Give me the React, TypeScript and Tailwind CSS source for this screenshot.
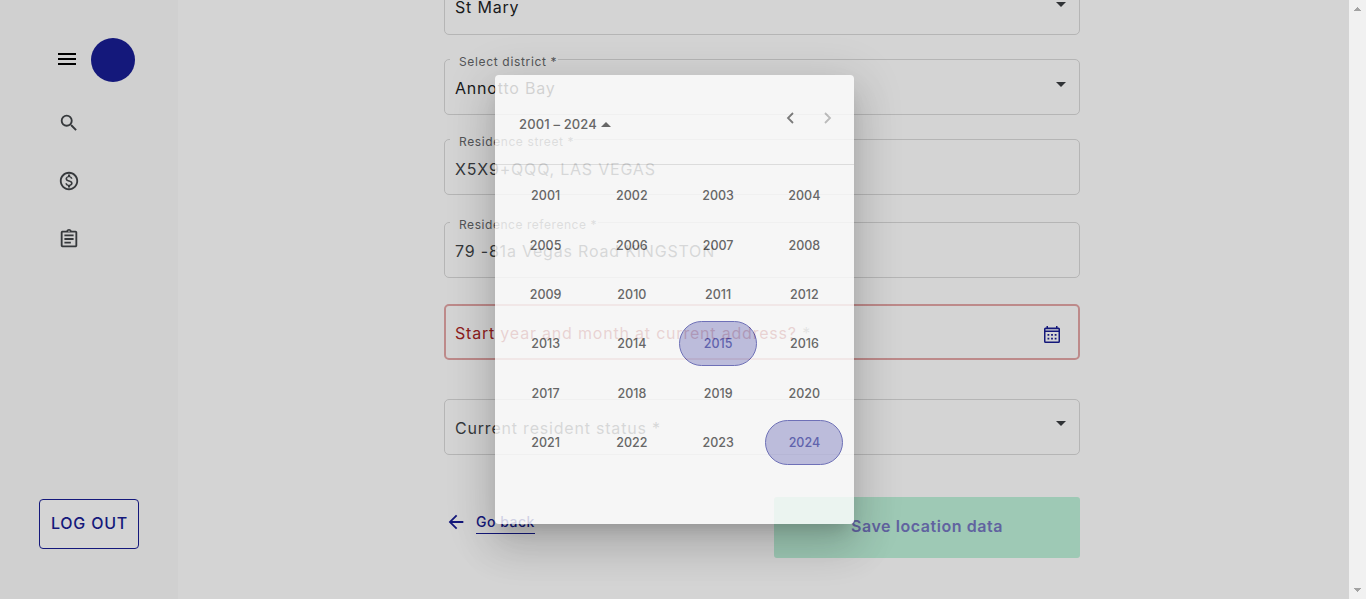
import type { ReactNode } from "react";
import { MdMenu, MdSearch, MdOutlineMonetizationOn, MdOutlineAssignment, MdArrowBack } from "react-icons/md";

const YEARS = Array.from({ length: 24 }, (_, i) => 2001 + i);

function Caret({ up = false }: { up?: boolean }) {
  return (
    <svg width="10" height="5" viewBox="0 0 10 5" fill="currentColor">
      {up ? <path d="M0 5 5 0l5 5z" /> : <path d="M0 0h10L5 5z" />}
    </svg>
  );
}

function Field({ label, children, select, className = "", textClass = "pt-[17px]", caretClass = "pt-[22px]" }: {
  label?: ReactNode;
  children: ReactNode;
  select?: boolean;
  className?: string;
  textClass?: string;
  caretClass?: string;
}) {
  return (
    <div className={`relative flex h-14 shrink-0 justify-between rounded-[5px] border border-[#b5b5b5] pl-[10px] pr-[13px] ${className}`}>
      {label}
      <span className={`text-[16px] leading-[22px] tracking-[0.8px] ${textClass}`}>{children}</span>
      {select && <span className={`text-[#303336] ${caretClass}`}><Caret /></span>}
    </div>
  );
}

function FloatingLabel({ children, className }: { children: ReactNode; className: string }) {
  return (
    <span className={`absolute -top-[7px] left-[5px] whitespace-nowrap bg-[#d4d4d4] pl-[9px] text-[12px] leading-[18px] text-[#535557] ${className}`}>
      {children}
    </span>
  );
}

function CalendarIcon() {
  return (
    <svg width="16" height="18" viewBox="0 0 16 18" fill="#14187b">
      <path fillRule="evenodd" d="M2.500 0H4v1.500h8V0h1.500v1.500h1A1.500 1.500 0 0 1 16 3v12.500a1.500 1.500 0 0 1-1.500 1.500h-13A1.500 1.500 0 0 1 0 15.500V3a1.500 1.500 0 0 1 1.500-1.500h1zM1.500 3.200v1.300h13V3.200zM1.500 6v9.500h13V6z" />
      <path d="M3.500 8h1.800v1.800H3.500zM7.100 8h1.800v1.800H7.100zM10.700 8h1.800v1.800h-1.800zM3.500 11.800h1.800v1.800H3.500zM7.100 11.800h1.800v1.800H7.100zM10.700 11.800h1.800v1.800h-1.800z" />
    </svg>
  );
}

function Sidebar() {
  return (
    <aside className="flex w-[178px] shrink-0 flex-col bg-[#d0d0d0] pt-[38px]">
      <div className="flex h-11 items-center pl-[55px]">
        <MdMenu size={24} className="-mt-[2px] text-black" />
        <span className="ml-3 size-11 rounded-full bg-[#14187b]" />
      </div>
      <nav className="flex flex-col gap-[36px] pl-[58px] pt-[30px] text-[#36393c]">
        <MdSearch size={22} />
        <MdOutlineMonetizationOn size={22} />
        <MdOutlineAssignment size={22} />
      </nav>
      <button className="ml-[39px] mt-auto mb-[50px] h-[50px] w-[100px] rounded-[4px] border border-[#14187b] bg-[#d4d4d4] pb-[2px] pl-[1px] text-[16px] font-medium tracking-[0.8px] whitespace-nowrap text-[#14187b]">
        LOG OUT
      </button>
    </aside>
  );
}

function YearPicker() {
  return (
    <div className="absolute left-[495px] top-[75px] h-[449px] w-[359px] rounded-[4px] bg-white text-[#4c4c4c] opacity-80 shadow-[0_11px_15px_-7px_rgba(0,0,0,0.2),0_24px_38px_3px_rgba(0,0,0,0.14),0_9px_46px_8px_rgba(0,0,0,0.12)]">
      <div className="flex h-[90px] justify-between border-b border-[#dedede] pl-6 pr-[22px]">
        <div className="flex items-center gap-[4px] self-start pt-[39px] text-[13px] leading-5 font-medium tracking-[0.15px]">
          <span>2001 – 2024</span>
          <Caret up />
        </div>
        <div className="flex gap-[30px] pt-[37px]">
          <svg width="8" height="12" viewBox="0 0 8 12" fill="none" stroke="#666" strokeWidth="1.8"><path d="M7 1 2 6l5 5" /></svg>
          <svg width="8" height="12" viewBox="0 0 8 12" fill="none" stroke="#b5b5b5" strokeWidth="1.8"><path d="m1 1 5 5-5 5" /></svg>
        </div>
      </div>
      <div className="grid grid-cols-4 auto-rows-[49.35px] pl-[7.5px] pr-[6.5px] pt-[6px] text-[12.5px] font-medium">
        {YEARS.map((year) => (
          <div key={year} className="flex items-center justify-center">
            <span className={year === 2015 || year === 2024
              ? "flex h-[45px] w-[78px] items-center justify-center rounded-full border-[1.5px] border-[#5558b0] bg-[#b7b7dd] pt-[2px] text-[#4447a4]"
              : "pt-[2px]"}>
              {year}
            </span>
          </div>
        ))}
      </div>
    </div>
  );
}

export default function App() {
  return (
    <div className="relative flex h-[599px] w-[1366px] overflow-hidden bg-[#d4d4d4] font-['Inter',sans-serif]">
      <Sidebar />
      <main className="ml-[266px] flex w-[636px] flex-col">
        <Field select className="-mt-[21px] text-[#191a1b]" textClass="pt-[16px]">St Mary</Field>
        <Field select className="mt-6 text-[#191a1b]" label={<FloatingLabel className="w-[108px] tracking-[0.66px]">Select district *</FloatingLabel>}>Annotto Bay</Field>
        <Field className="mt-6 text-[#36393c]" textClass="pt-[18px]" label={<FloatingLabel className="w-[124px] tracking-[0.6px]">Residence street *</FloatingLabel>}>X5X9+QQQ, LAS VEGAS</Field>
        <Field className="mt-[27px] text-[#36393c]" label={<FloatingLabel className="w-[148px] tracking-[0.55px]">Residence reference *</FloatingLabel>}>79 -81a Vegas Road KINGSTON</Field>
        <div className="mt-[26px] flex h-14 shrink-0 items-center justify-between rounded-[5px] border-2 border-[#bd8a8a] pl-[9px] pr-[18px] text-[16px] tracking-[0.8px] text-[#8e2020]">
          <span className="pt-[1px]">Start year and month at current address? <span className="text-[#777]">*</span></span>
          <span className="pt-[5px]"><CalendarIcon /></span>
        </div>
        <Field select className="mt-[39px] text-[#36393c]" caretClass="pt-[21px]">Current resident status *</Field>
        <div className="mt-[42px] flex h-[61px] justify-between text-[#14187b]">
          <a className="flex h-[37px] items-end pl-[2px]">
            <MdArrowBack size={20} className="mb-[2px] scale-110" />
            <span className="ml-[10px] border-b border-[#14187b] pb-[1px] text-[14px] leading-[20px] font-medium tracking-[0.5px]">Go back</span>
          </a>
          <button className="h-[61px] w-[306px] rounded-[3px] bg-[#9ec9b5] pb-[3px] text-[16px] font-semibold tracking-[0.56px] text-[#6163a0]">
            Save location data
          </button>
        </div>
      </main>
      <div className="ml-auto flex w-[17px] flex-col items-center justify-between bg-[#f1f1f1] py-[7px] text-[#a3a3a3]">
        <svg width="7" height="4" viewBox="0 0 7 4" fill="currentColor" shapeRendering="crispEdges"><path d="M0 4 3.5 0 7 4z" /></svg>
        <svg width="7" height="4" viewBox="0 0 7 4" fill="currentColor" shapeRendering="crispEdges"><path d="M0 0h7L3.5 4z" /></svg>
      </div>
      <YearPicker />
    </div>
  );
}
